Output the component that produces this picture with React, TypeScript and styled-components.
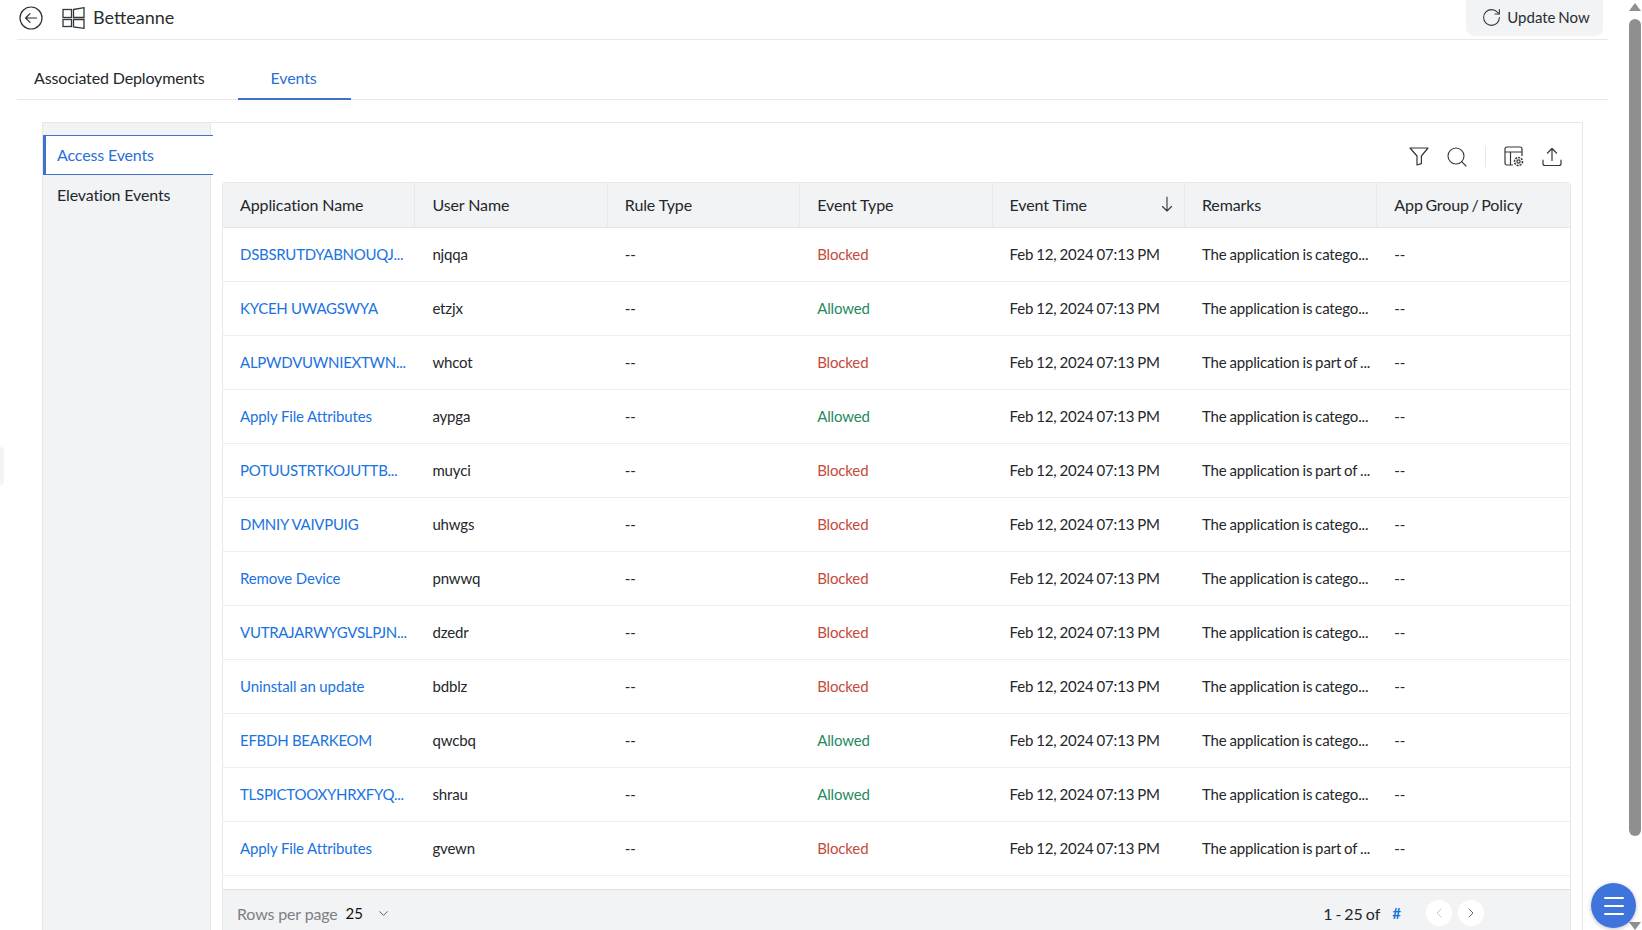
import styled, { createGlobalStyle } from "styled-components";
import { ChevronDown, ChevronLeft, ChevronRight, RotateCw, Search } from "lucide-react";

interface EventRow {
    app: string;
    user: string;
    type: "Blocked" | "Allowed";
    remark: string;
}

const CATEGO = "The application is catego...";
const PART = "The application is part of ...";

const rows: EventRow[] = [
    { app: "DSBSRUTDYABNOUQJ...", user: "njqqa", type: "Blocked", remark: CATEGO },
    { app: "KYCEH UWAGSWYA", user: "etzjx", type: "Allowed", remark: CATEGO },
    { app: "ALPWDVUWNIEXTWN...", user: "whcot", type: "Blocked", remark: PART },
    { app: "Apply File Attributes", user: "aypga", type: "Allowed", remark: CATEGO },
    { app: "POTUUSTRTKOJUTTB...", user: "muyci", type: "Blocked", remark: PART },
    { app: "DMNIY VAIVPUIG", user: "uhwgs", type: "Blocked", remark: CATEGO },
    { app: "Remove Device", user: "pnwwq", type: "Blocked", remark: CATEGO },
    { app: "VUTRAJARWYGVSLPJN...", user: "dzedr", type: "Blocked", remark: CATEGO },
    { app: "Uninstall an update", user: "bdblz", type: "Blocked", remark: CATEGO },
    { app: "EFBDH BEARKEOM", user: "qwcbq", type: "Allowed", remark: CATEGO },
    { app: "TLSPICTOOXYHRXFYQ...", user: "shrau", type: "Allowed", remark: CATEGO },
    { app: "Apply File Attributes", user: "gvewn", type: "Blocked", remark: PART },
];

const columns = ["Application Name", "User Name", "Rule Type", "Event Type", "Event Time", "Remarks", "App Group / Policy"];

function BackIcon() {
    return (
        <svg width="24" height="24" viewBox="0 0 24 24" fill="none" stroke="#2a2d31" strokeWidth="1.2" strokeLinecap="round" strokeLinejoin="round">
            <circle cx="12" cy="12" r="11" />
            <path d="M17.500 12H6.800M11 7.600 6.600 12l4.400 4.400" />
        </svg>
    );
}

function DeviceLogo() {
    return (
        <svg width="23" height="22" viewBox="0 0 23 22" fill="none" stroke="#33363a" strokeWidth="1.3">
            <rect x="1" y="2.500" width="8.500" height="8" />
            <path d="M11.500 2.500 22 0.700V10.500H11.500z" />
            <rect x="1" y="12.500" width="8.500" height="7" />
            <path d="M11.500 12.500H22v8.800L11.500 20z" />
        </svg>
    );
}

function FilterIcon() {
    return (
        <svg width="20" height="19" viewBox="0 0 20 19" fill="none" stroke="#33363a" strokeWidth="1.2" strokeLinejoin="round">
            <path d="M1 1h18l-6.600 8v7.600L8 18V9z" />
        </svg>
    );
}

function ColumnsIcon() {
    return (
        <svg width="21" height="21" viewBox="0 0 21 21" fill="none" stroke="#33363a" strokeWidth="1.2" strokeLinejoin="round">
            <path d="M9 19H3a2 2 0 0 1-2-2V3a2 2 0 0 1 2-2h13a2 2 0 0 1 2 2v7" />
            <path d="M1 6h17M6.500 6v13" />
            <circle cx="14.500" cy="15.500" r="1.600" />
            <circle cx="14.500" cy="15.500" r="4" strokeDasharray="2 1" strokeWidth="1.500" />
        </svg>
    );
}

function UploadIcon() {
    return (
        <svg width="20" height="20" viewBox="0 0 20 20" fill="none" stroke="#33363a" strokeWidth="1.2" strokeLinecap="round" strokeLinejoin="round">
            <path d="M10 13.500V1.500M5.500 6 10 1.500 14.500 6" />
            <path d="M1 13v3.500A2 2 0 0 0 3 18.500h14a2 2 0 0 0 2-2V13" />
        </svg>
    );
}

function SortIcon() {
    return (
        <svg width="12" height="16" viewBox="0 0 12 16" fill="none" stroke="#33363a" strokeWidth="1.1" strokeLinecap="round" strokeLinejoin="round">
            <path d="M6 1v14M1.500 10.500 6 15l4.500-4.500" />
        </svg>
    );
}

function App() {
    return (
        <Page>
            <GlobalStyle />
            <EdgeTab />
            <Main>
                <TopBar>
                    <TopLeft>
                        <BackIcon />
                        <DeviceLogo />
                        <DeviceName>Betteanne</DeviceName>
                    </TopLeft>
                    <UpdateButton>
                        <RotateCw size={21} strokeWidth={1.2} />
                        Update Now
                    </UpdateButton>
                </TopBar>
                <Tabs>
                    <Tab>Associated Deployments</Tab>
                    <Tab $active>Events</Tab>
                </Tabs>
                <Panel>
                    <Side>
                        <SideItem $active>Access Events</SideItem>
                        <SideItem>Elevation Events</SideItem>
                    </Side>
                    <Content>
                        <Toolbar>
                            <ToolIcon><FilterIcon /></ToolIcon>
                            <ToolIcon><Search size={24} strokeWidth={1.1} color="#33363a" /></ToolIcon>
                            <ToolDivider />
                            <ToolIcon><ColumnsIcon /></ToolIcon>
                            <ToolIcon><UploadIcon /></ToolIcon>
                        </Toolbar>
                        <Table>
                            <HeadRow>
                                {columns.map((col) => (
                                    <HeadCell key={col} $tight={col.includes("/")}>
                                        <span>{col}</span>
                                        {col === "Event Time" && <SortIcon />}
                                    </HeadCell>
                                ))}
                            </HeadRow>
                            <Body>
                                {rows.map((row, i) => (
                                    <Row key={i}>
                                        <AppLink $caps={row.app === row.app.toUpperCase()}>{row.app}</AppLink>
                                        <Cell>{row.user}</Cell>
                                        <Cell>--</Cell>
                                        <Status $type={row.type}>{row.type}</Status>
                                        <Cell>Feb 12, 2024 07:13 PM</Cell>
                                        <Cell>{row.remark}</Cell>
                                        <Cell>--</Cell>
                                    </Row>
                                ))}
                            </Body>
                            <Footer>
                                <RowsLabel>Rows per page</RowsLabel>
                                <RowsValue>25</RowsValue>
                                <ChevronDown size={15} strokeWidth={1.2} color="#33363a" />
                                <Pager>
                                    <PageCount>1 - 25 of</PageCount>
                                    <Hash>#</Hash>
                                    <PageButtons>
                                        <PageButton><ChevronLeft size={16} strokeWidth={1.1} color="#a9adb2" /></PageButton>
                                        <PageButton><ChevronRight size={16} strokeWidth={1.1} color="#33363a" /></PageButton>
                                    </PageButtons>
                                </Pager>
                            </Footer>
                        </Table>
                    </Content>
                </Panel>
            </Main>
            <ScrollBar>
                <ArrowUp />
                <Thumb />
                <ArrowDownMark />
            </ScrollBar>
            <Fab>
                <FabLine />
                <FabLine />
                <FabLine />
            </Fab>
        </Page>
    );
}

const GlobalStyle = createGlobalStyle`
    html, body {
        margin: 0;
        height: 930px;
        overflow: hidden;
        background: #fff;
    }
    body {
        font-family: "Lato", "Liberation Sans", sans-serif;
        color: #24272b;
    }
`;

const Page = styled.div`
    position: relative;
    width: 1642px;
    height: 930px;
    display: flex;
    overflow: hidden;
`;
const EdgeTab = styled.div`
    position: absolute;
    left: 0;
    top: 447px;
    width: 4px;
    height: 38px;
    background: #f3f4f6;
    border-radius: 0 6px 6px 0;
`;
const Main = styled.div`
    margin-left: 17px;
    flex: none;
    width: 1591px;
`;
const TopBar = styled.header`
    height: 40px;
    box-sizing: border-box;
    border-bottom: 1px solid #e6e8ea;
    display: flex;
    align-items: flex-start;
    justify-content: space-between;
    padding-right: 5px;
`;
const TopLeft = styled.div`
    display: flex;
    align-items: center;
    height: 35px;
    padding-left: 2px;
    svg:nth-child(2) {
        margin-left: 19px;
    }
`;
const DeviceName = styled.span`
    margin-left: 8px;
    padding-bottom: 2px;
    font-size: 18px;
    color: #2a2d31;
`;
const UpdateButton = styled.button`
    width: 137px;
    height: 36px;
    border: 0;
    border-radius: 0 0 8px 8px;
    background: #f1f3f5;
    display: flex;
    align-items: center;
    justify-content: center;
    gap: 5px;
    padding: 0 0 2px 2px;
    font: 400 15px "Lato", sans-serif;
    word-spacing: -1px;
    color: #2a2d31;
    svg {
        color: #33363a;
    }
`;
const Tabs = styled.nav`
    height: 60px;
    box-sizing: border-box;
    border-bottom: 1px solid #e6e8ea;
    display: flex;
`;
const Tab = styled.div<{ $active?: boolean }>`
    height: 60px;
    box-sizing: border-box;
    padding: 28px ${(props) => (props.$active ? "34px" : "33px")} 0 ${(props) => (props.$active ? "33px" : "17px")};
    font-size: 16px;
    line-height: 20px;
    letter-spacing: -0.14px;
    color: ${(props) => (props.$active ? "#2b6fd6" : "#24272b")};
    border-bottom: ${(props) => (props.$active ? "2px solid #3f72c9" : "0")};
`;
const Panel = styled.section`
    margin: 22px 25px 0 25px;
    height: 830px;
    border: 1px solid #e6e8ea;
    border-bottom: 0;
    display: flex;
`;
const Side = styled.aside`
    width: 167px;
    flex: none;
    background: #f1f3f5;
    border-right: 1px solid #e6e8ea;
    padding-top: 12px;
    box-sizing: content-box;
`;
const SideItem = styled.div<{ $active?: boolean }>`
    position: relative;
    height: ${(props) => (props.$active ? "36px" : "39px")};
    margin-right: ${(props) => (props.$active ? "-3px" : "0")};
    box-sizing: content-box;
    padding: 0 0 2px ${(props) => (props.$active ? "11px" : "14px")};
    display: flex;
    align-items: center;
    font-size: 16px;
    letter-spacing: -0.15px;
    color: ${(props) => (props.$active ? "#2b6fd6" : "#24272b")};
    background: ${(props) => (props.$active ? "#fff" : "transparent")};
    border-left: ${(props) => (props.$active ? "3px solid #3f72c9" : "0")};
    border-top: ${(props) => (props.$active ? "1px solid #3f72c9" : "0")};
    border-bottom: ${(props) => (props.$active ? "1px solid #3f72c9" : "0")};
`;
const Content = styled.div`
    flex: 1;
    min-width: 0;
    padding: 0 11px 0 11px;
`;
const Toolbar = styled.div`
    height: 59px;
    box-sizing: border-box;
    padding-top: 23px;
    display: flex;
    align-items: flex-start;
    justify-content: flex-end;
`;
const ToolIcon = styled.span`
    width: 38px;
    height: 21px;
    display: flex;
    align-items: center;
    justify-content: center;
`;
const ToolDivider = styled.span`
    width: 1px;
    height: 21px;
    background: #e6e8ea;
    margin: 0 9px;
`;
const Table = styled.div`
    border: 1px solid #e6e8ea;
    border-bottom: 0;
    border-radius: 4px 4px 0 0;
`;
const HeadRow = styled.div`
    display: grid;
    grid-template-columns: repeat(6, 192.4px) 1fr;
    height: 45px;
    box-sizing: border-box;
    background: #f1f3f5;
    border-bottom: 1px solid #e3e5e8;
`;
const HeadCell = styled.div<{ $tight?: boolean }>`
    display: flex;
    align-items: center;
    justify-content: space-between;
    padding: 0 11px 2px 17px;
    font-size: 16px;
    letter-spacing: -0.1px;
    word-spacing: ${(props) => (props.$tight ? "-1.4px" : "0")};
    color: #24272b;
    border-right: 1px solid #e6e8ea;
    &:last-child {
        border-right: 0;
    }
`;
const Body = styled.div`
    height: 661px;
    overflow: hidden;
`;
const Row = styled.div`
    display: grid;
    grid-template-columns: repeat(6, 192.4px) 1fr;
    height: 54px;
    box-sizing: border-box;
    border-bottom: 1px solid #eceef0;
    align-items: center;
`;
const Cell = styled.div`
    padding: 0 0 2px 17px;
    font-size: 15px;
    letter-spacing: -0.15px;
    word-spacing: -0.8px;
    white-space: nowrap;
    color: #24272b;
`;
const AppLink = styled(Cell)<{ $caps?: boolean }>`
    color: #1a73e0;
    letter-spacing: ${(props) => (props.$caps ? "-0.27px" : "-0.13px")};
    word-spacing: 0;
`;
const Status = styled(Cell)<{ $type: "Blocked" | "Allowed" }>`
    color: ${(props) => (props.$type === "Blocked" ? "#c44a3c" : "#1f8a5a")};
`;
const Footer = styled.div`
    height: 46px;
    background: #f1f3f5;
    border-top: 1px solid #dfe1e4;
    display: flex;
    align-items: center;
    padding: 0 86px 14px 14px;
    box-sizing: content-box;
`;
const RowsLabel = styled.span`
    font-size: 16px;
    letter-spacing: -0.15px;
    color: #7c8086;
`;
const RowsValue = styled.span`
    margin: 0 13px 0 8px;
    font-size: 15px;
    color: #111;
`;
const Pager = styled.div`
    margin-left: auto;
    display: flex;
    align-items: center;
`;
const PageCount = styled.span`
    font-size: 16px;
    word-spacing: -1.2px;
    color: #24272b;
`;
const Hash = styled.span`
    margin-left: 12px;
    font-size: 15px;
    font-weight: 700;
    color: #1a73e0;
`;
const PageButtons = styled.div`
    margin-left: 25px;
    display: flex;
    gap: 6px;
`;
const PageButton = styled.span`
    width: 26px;
    height: 26px;
    border-radius: 50%;
    background: #fff;
    display: flex;
    align-items: center;
    justify-content: center;
`;
const ScrollBar = styled.div`
    position: absolute;
    right: 1px;
    top: 0;
    bottom: 0;
    width: 12px;
    display: flex;
    flex-direction: column;
    align-items: center;
`;
const ArrowUp = styled.div`
    margin-top: 3px;
    width: 0;
    height: 0;
    border-left: 6px solid transparent;
    border-right: 6px solid transparent;
    border-bottom: 8px solid #8f8f8f;
`;
const Thumb = styled.div`
    margin-top: 8px;
    width: 12px;
    height: 817px;
    border-radius: 6px;
    background: #8f8f8f;
`;
const ArrowDownMark = styled.div`
    margin-top: auto;
    width: 0;
    height: 0;
    border-left: 6px solid transparent;
    border-right: 6px solid transparent;
    border-top: 8px solid #8f8f8f;
`;
const Fab = styled.div`
    position: absolute;
    left: 1591px;
    top: 883px;
    width: 45px;
    height: 45px;
    border-radius: 50%;
    background: #3f74dc;
    box-shadow: 0 1px 4px rgba(0, 0, 0, 0.25);
    display: flex;
    flex-direction: column;
    align-items: center;
    justify-content: center;
    gap: 6px;
`;
const FabLine = styled.span`
    width: 20px;
    height: 2px;
    background: #fff;
    border-radius: 1px;
`;

export default App;
